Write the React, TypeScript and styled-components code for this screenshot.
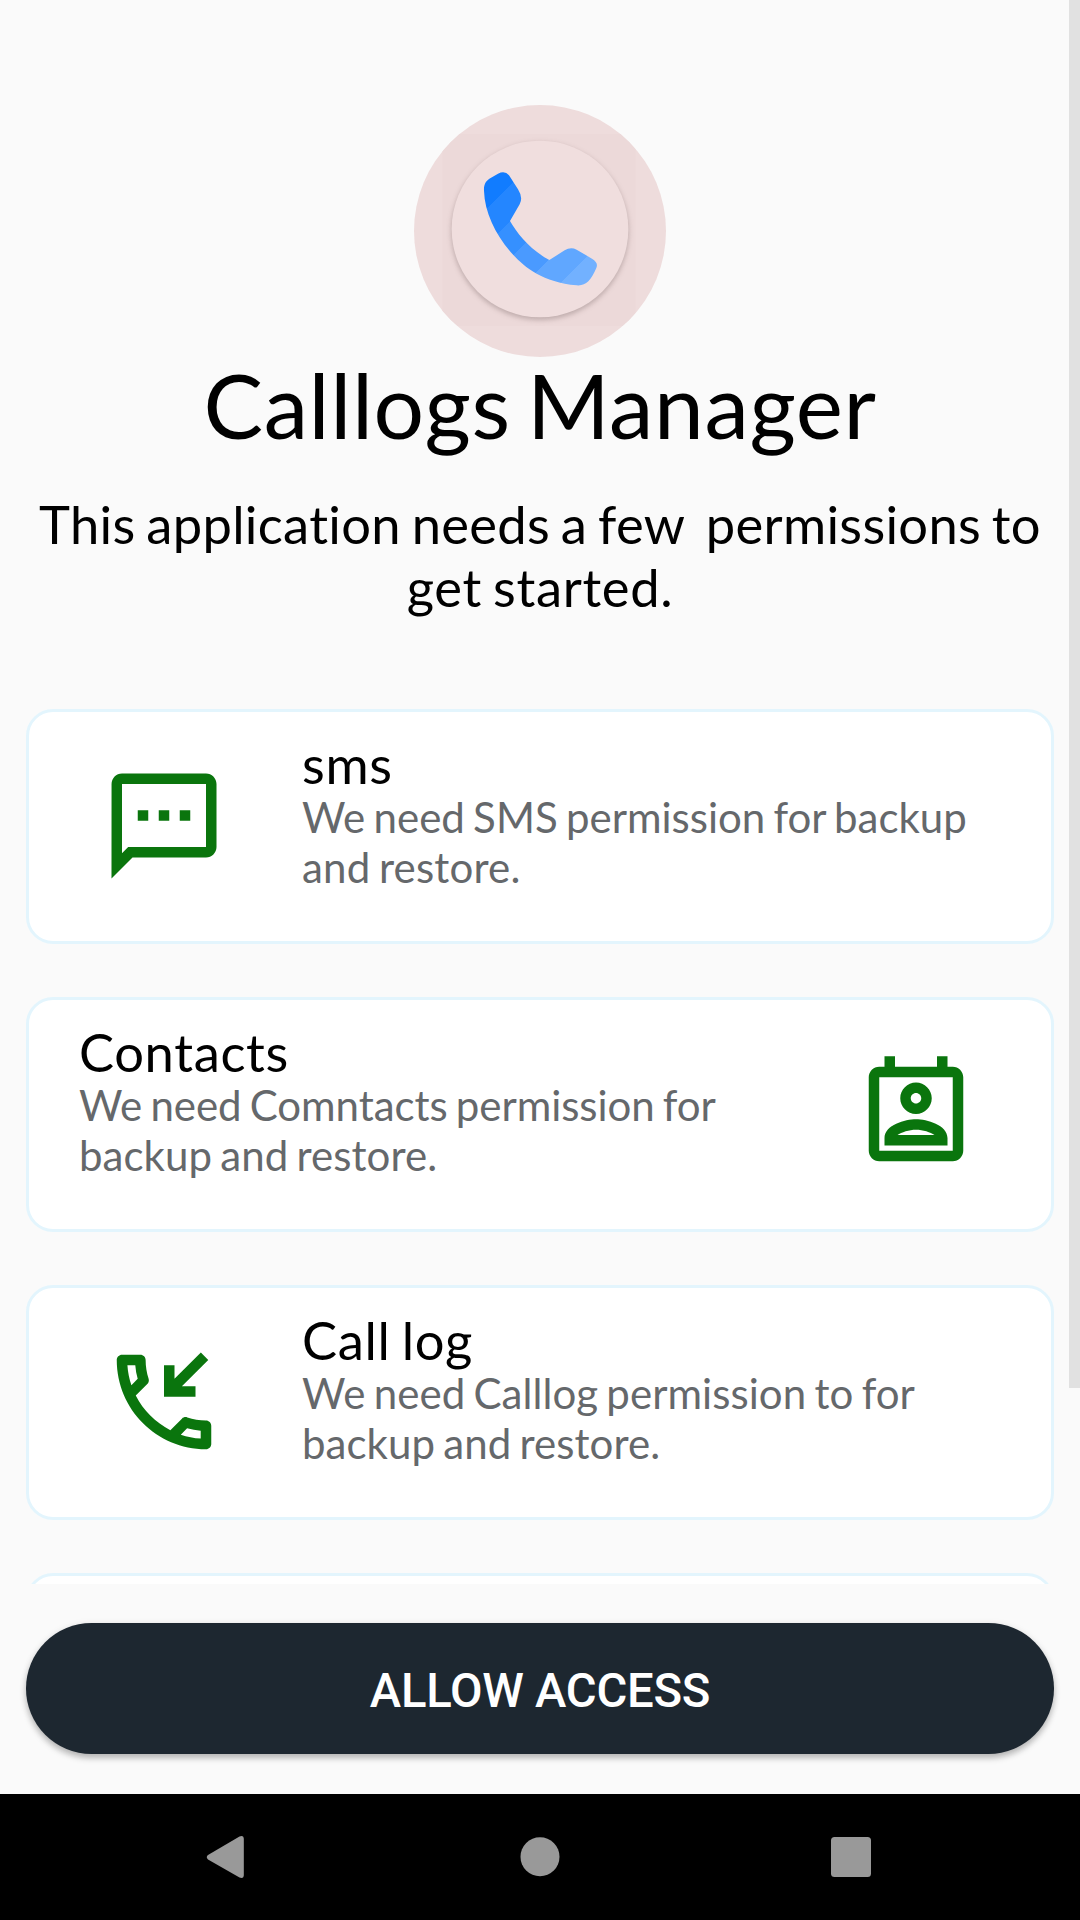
import React from "react";
import styled, { createGlobalStyle } from "styled-components";

const GlobalStyle = createGlobalStyle`
  * { box-sizing: border-box; }
  body { margin: 0; background: #fafafa; }
`;

const Screen = styled.div`
  display: flex;
  flex-direction: column;
  width: 1080px;
  height: 1920px;
  overflow: hidden;
  background: #fafafa;
  font-family: Lato, "Liberation Sans", sans-serif;
  font-variant-ligatures: none;
  color: #000;
`;

const ScrollArea = styled.main`
  position: relative;
  flex: 0 0 1584px;
  display: flex;
  flex-direction: column;
  overflow: hidden;
  padding: 105px 26px 0;
`;

const ScrollThumb = styled.div`
  position: absolute;
  top: 0;
  right: 0;
  width: 11px;
  height: 1388px;
  background: #e1e1e1;
`;

const Header = styled.header`
  display: flex;
  flex-direction: column;
  align-items: center;
  flex: 0 0 604px;
`;

const Title = styled.h1`
  margin: -6px 0 0;
  font-size: 89.25px;
  font-weight: 400;
  line-height: 107px;
  letter-spacing: 0.6px;
  word-spacing: -7.3px;
  white-space: nowrap;
`;

const Subtitle = styled.p`
  margin: 34px 0 0;
  font-size: 52.5px;
  line-height: 63px;
  word-spacing: -2.9px;
  text-align: center;
`;

const TextLine = styled.span<{ $tracking?: number }>`
  display: block;
  letter-spacing: ${(p) => p.$tracking ?? 0}px;
  white-space: pre;
`;

const CardList = styled.section`
  display: flex;
  flex-direction: column;
  gap: 53px;
`;

const Card = styled.article<{ $reverse?: boolean }>`
  display: flex;
  flex-direction: ${(p) => (p.$reverse ? "row-reverse" : "row")};
  align-items: center;
  flex: 0 0 235px;
  height: 235px;
  padding: ${(p) => (p.$reverse ? "0 72px 2px 50px" : "0 50px 2px 72px")};
  justify-content: ${(p) => (p.$reverse ? "space-between" : "flex-start")};
  gap: ${(p) => (p.$reverse ? "0" : "75px")};
  border: 3px solid #e3f5fd;
  border-radius: 27px;
  background: #fff;
`;

const CardText = styled.div`
  align-self: flex-start;
  padding-top: 20px;
`;

const CardTitle = styled.h2`
  margin: 0;
  font-size: 52.5px;
  font-weight: 400;
  line-height: 63px;
  letter-spacing: 0.65px;
  word-spacing: -3px;
`;

const CardBody = styled.p`
  margin: -3px 0 0;
  font-size: 42px;
  line-height: 50px;
  word-spacing: -2.5px;
  color: #65686b;
`;

const CardIcon = styled.svg`
  flex: none;
  width: 126px;
  height: 126px;
  fill: #0a750d;
`;

const Footer = styled.footer`
  flex: 0 0 210px;
  padding: 39px 26px 0;
`;

const AllowButton = styled.button`
  display: flex;
  align-items: center;
  justify-content: center;
  width: 100%;
  height: 131px;
  padding: 5px 0 0;
  border: 0;
  border-radius: 66px;
  background: #1d2730;
  color: #fff;
  font: 500 47.25px/56px Roboto, "Liberation Sans", sans-serif;
  letter-spacing: -0.25px;
  box-shadow: 0 4px 6px rgba(0, 0, 0, 0.26), 0 1px 9px rgba(0, 0, 0, 0.06);
`;

const NavBar = styled.nav`
  display: flex;
  flex: 0 0 126px;
  background: #000;
`;

const NavIcons = styled.svg`
  width: 1080px;
  height: 126px;
  fill: #999;
`;

const LogoSvg = styled.svg`
  flex: none;
  width: 252px;
  height: 252px;
`;

const handset =
  "M252 302C251 284 257 274 268 266L294 251Q315 241 327 256L354 298Q370 323 359 343L330 393C352 432 392 480 448 510L494 481Q512 470 530 479L576 506Q596 518 589 534Q578 560 565 574Q551 588 530 586C430 577 374 532 340 495C290 440 254 370 252 302Z";

function Logo() {
  return (
    <LogoSvg viewBox="42 45 756 756">
      <defs>
        <linearGradient id="bands" gradientUnits="userSpaceOnUse" x1="250" y1="250" x2="590" y2="590">
          <stop offset=".171" stopColor="#117cff" />
          <stop offset=".171" stopColor="#2486ff" />
          <stop offset=".329" stopColor="#2486ff" />
          <stop offset=".329" stopColor="#3590ff" />
          <stop offset=".494" stopColor="#3590ff" />
          <stop offset=".494" stopColor="#4a9aff" />
          <stop offset=".671" stopColor="#4a9aff" />
          <stop offset=".671" stopColor="#60a7ff" />
          <stop offset=".826" stopColor="#60a7ff" />
          <stop offset=".826" stopColor="#72b1ff" />
        </linearGradient>
        <clipPath id="disc">
          <circle cx="420" cy="423" r="378" />
        </clipPath>
        <filter id="soft" x="-20%" y="-20%" width="140%" height="140%">
          <feGaussianBlur stdDeviation="8" />
        </filter>
      </defs>
      <circle cx="420" cy="423" r="378" fill="#eedcdc" />
      <rect x="127" y="132" width="580" height="576" fill="#ecd9d9" clipPath="url(#disc)" />
      <circle cx="420" cy="424" r="266" fill="#b3a0a0" opacity=".8" filter="url(#soft)" />
      <circle cx="420" cy="417" r="265" fill="#f0dede" />
      <path d={handset} fill="url(#bands)" />
    </LogoSvg>
  );
}

const icons = {
  sms: "M4 4h16v12H5.17L4 17.17V4m0-2c-1.1 0-1.99.9-1.99 2L2 22l4-4h14c1.1 0 2-.9 2-2V4c0-1.1-.9-2-2-2H4zm3 7h2v2H7zm4 0h2v2h-2zm4 0h2v2h-2z",
  contacts:
    "M19 3h-1V1h-2v2H8V1H6v2H5c-1.1 0-2 .9-2 2v14c0 1.1.9 2 2 2h14c1.1 0 2-.9 2-2V5c0-1.1-.9-2-2-2zm0 16H5V5h14v14zM12 12c1.65 0 3-1.35 3-3s-1.35-3-3-3-3 1.35-3 3 1.35 3 3 3zm0-4c.55 0 1 .45 1 1s-.45 1-1 1-1-.45-1-1 .45-1 1-1zM18 16.58C18 14.08 14.03 13 12 13s-6 1.08-6 3.58V18h12v-1.42zM8.48 16c.74-.51 2.23-1 3.52-1 1.3 0 2.78.49 3.52 1H8.48z",
  call: "M18 9h-2.59l5.02-5.02-1.41-1.41L14 7.59V5h-2v6h6V9zM20 15.5c-1.25 0-2.45-.2-3.57-.57-.1-.03-.21-.05-.31-.05-.26 0-.51.1-.71.29l-2.2 2.2c-2.83-1.44-5.15-3.75-6.59-6.59l2.2-2.2c.28-.28.36-.67.25-1.02C8.7 6.45 8.5 5.25 8.5 4c0-.55-.45-1-1-1H4c-.55 0-1 .45-1 1 0 9.39 7.61 17 17 17 .55 0 1-.45 1-1v-3.5c0-.55-.45-1-1-1zM5.03 5h1.5c.07.88.22 1.75.46 2.59L5.79 8.8c-.41-1.21-.67-2.48-.76-3.8zM19 18.97c-1.32-.09-2.59-.35-3.8-.75l1.2-1.2c.85.24 1.71.39 2.59.45v1.5z",
};

type Line = { text: string; tracking?: number };
type Permission = { title: string; lines: Line[]; icon: string; reverse?: boolean };

const permissions: Permission[] = [
  {
    title: "sms",
    lines: [
      { text: "We need SMS permission for backup" },
      { text: "and restore.", tracking: 0.2 },
    ],
    icon: icons.sms,
  },
  {
    title: "Contacts",
    lines: [
      { text: "We need Comntacts permission for", tracking: -0.05 },
      { text: "backup and restore.", tracking: 0.05 },
    ],
    icon: icons.contacts,
    reverse: true,
  },
  {
    title: "Call log",
    lines: [
      { text: "We need Calllog permission to for", tracking: 0.05 },
      { text: "backup and restore.", tracking: 0.05 },
    ],
    icon: icons.call,
  },
];

export default function App() {
  return (
    <>
      <GlobalStyle />
      <Screen>
        <ScrollArea>
          <Header>
            <Logo />
            <Title>Calllogs Manager</Title>
            <Subtitle>
              <TextLine $tracking={0.3}>{"This application needs a few  permissions to"}</TextLine>
              <TextLine $tracking={0.65}>get started.</TextLine>
            </Subtitle>
          </Header>
          <CardList>
            {permissions.map((p) => (
              <Card key={p.title} $reverse={p.reverse}>
                <CardIcon viewBox="0 0 24 24" fillRule="evenodd">
                  <path d={p.icon} />
                </CardIcon>
                <CardText>
                  <CardTitle>{p.title}</CardTitle>
                  <CardBody>
                    {p.lines.map((line) => (
                      <TextLine key={line.text} $tracking={line.tracking}>
                        {line.text}
                      </TextLine>
                    ))}
                  </CardBody>
                </CardText>
              </Card>
            ))}
            <Card />
          </CardList>
          <ScrollThumb />
        </ScrollArea>
        <Footer>
          <AllowButton>ALLOW ACCESS</AllowButton>
        </Footer>
        <NavBar>
          <NavIcons viewBox="0 0 1080 126">
            <path d="M208 61Q205.500 63 208 65.500L239.500 83.500Q243.800 85 243.800 81V45Q243.800 41 239.500 42.500Z" />
            <circle cx="540" cy="62.800" r="19.500" />
            <rect x="831" y="43" width="40" height="40" rx="3.500" />
          </NavIcons>
        </NavBar>
      </Screen>
    </>
  );
}
